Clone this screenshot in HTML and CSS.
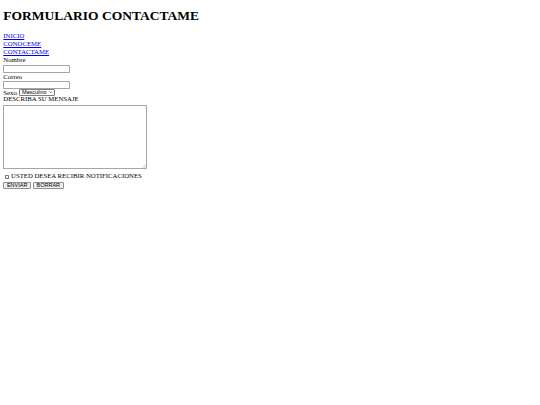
FILE: index.html
```html
<!DOCTYPE html>
<html>
<head>
<meta charset="utf-8">
<title>Formulario</title>
<link rel="stylesheet" href="styles.css">
</head>
<body class="page">
<h1 class="title">FORMULARIO CONTACTAME</h1>
<nav class="menu">
<a href="#">INICIO</a>
<a href="#">CONOCEME</a>
<a href="#">CONTACTAME</a>
</nav>
<form class="form">
<label class="lbl">Nombre</label>
<input class="field" type="text">
<label class="lbl">Correo</label>
<input class="field field2" type="text">
<div class="sexo-row">
<label class="lbl">Sexo</label>
<span class="sel-wrap">
<select class="sel"><option>Masculino</option><option>Femenino</option></select>
<svg class="chev" viewBox="0 0 6 4" width="3.2" height="2.2"><path d="M0.8 0.8 L3 3 L5.2 0.8" fill="none" stroke="#111" stroke-width="1.2"/></svg>
</span>
</div>
<label class="lbl">DESCRIBA SU MENSAJE</label>
<span class="msg-wrap">
<textarea class="msg"></textarea>
<svg class="grip" viewBox="0 0 4 4" width="4" height="4"><path d="M0.5 3.8 L3.8 0.5 M2.2 3.8 L3.8 2.2" fill="none" stroke="#9a9a9a" stroke-width="0.5"/></svg>
</span>
<div class="chk-row">
<input class="chk" type="checkbox">
<label class="lbl chk-lbl">USTED DESEA RECIBIR NOTIFICACIONES</label>
</div>
<div class="btn-row">
<button class="btn" type="button">ENVIAR</button>
<button class="btn" type="button">BORRAR</button>
</div>
</form>
</body>
</html>
```
FILE: styles.css
```css
.page {
  margin: 0;
  padding: 0 0 0 3.3px;
  background: #fff;
  color: #000;
  font-family: "Liberation Serif", "Times New Roman", serif;
  font-size: 6.75px;
  line-height: 8px;
}
.title {
  font-size: 13.5px;
  line-height: 16px;
  font-weight: bold;
  margin: 8.4px 0 8px;
}
.menu a {
  display: block;
  color: #0000ee;
  text-decoration: underline;
  text-decoration-thickness: 0.5px;
  text-underline-offset: 0.8px;
}
.form {
  display: flex;
  flex-direction: column;
  align-items: flex-start;
}
.lbl {
  display: block;
  line-height: 8px;
}
.field {
  box-sizing: border-box;
  width: 67px;
  height: 8px;
  margin: 0.3px 0 0;
  padding: 0 1px;
  border: 1px solid #a6a6a6;
  border-radius: 0.8px;
  background: #fff;
  font-family: "Liberation Sans", Arial, sans-serif;
  font-size: 5.5px;
  outline: none;
}
.field2 {
  margin-top: 0;
  height: 8.3px;
}
.sexo-row {
  display: flex;
  align-items: flex-start;
  height: 6px;
}
.sexo-row .lbl {
  margin-top: -0.3px;
}
.sel-wrap {
  position: relative;
  display: block;
  margin: 0.3px 0 0 1.9px;
}
.sel {
  appearance: none;
  -webkit-appearance: none;
  box-sizing: border-box;
  display: block;
  width: 36.2px;
  height: 6.4px;
  margin: 0;
  padding: 0 0 0 2.2px;
  border: 0.8px solid #7d7d7d;
  border-radius: 1px;
  background: #fff;
  color: #000;
  font-family: "Liberation Sans", Arial, sans-serif;
  font-size: 5.5px;
  line-height: 4.8px;
}
.chev {
  position: absolute;
  right: 3px;
  top: 2px;
  pointer-events: none;
}
.msg-wrap {
  position: relative;
  display: block;
  margin-top: 2.5px;
}
.msg {
  box-sizing: border-box;
  display: block;
  width: 143.4px;
  height: 64px;
  margin: 0;
  padding: 0;
  border: 1px solid #a6a6a6;
  border-radius: 0.8px;
  background: #fff;
  resize: none;
  outline: none;
}
.grip {
  position: absolute;
  right: 1px;
  bottom: 1px;
}
.chk-row {
  display: flex;
  align-items: flex-start;
  margin-top: 2.5px;
  height: 8px;
}
.chk {
  appearance: none;
  -webkit-appearance: none;
  box-sizing: border-box;
  width: 4.2px;
  height: 4.2px;
  margin: 2.8px 0 0 1.7px;
  border: 0.7px solid #777;
  border-radius: 0.7px;
  background: #fff;
}
.chk-lbl {
  margin-left: 1.9px;
}
.btn-row {
  display: flex;
  gap: 2px;
  margin-top: 2.3px;
}
.btn {
  box-sizing: border-box;
  height: 7px;
  margin: 0;
  padding: 0 2.6px;
  border: 0.8px solid #8f8f8f;
  border-radius: 1px;
  background: #efefef;
  color: #000;
  font-family: "Liberation Sans", Arial, sans-serif;
  font-size: 5.5px;
  line-height: 5px;
}
```
